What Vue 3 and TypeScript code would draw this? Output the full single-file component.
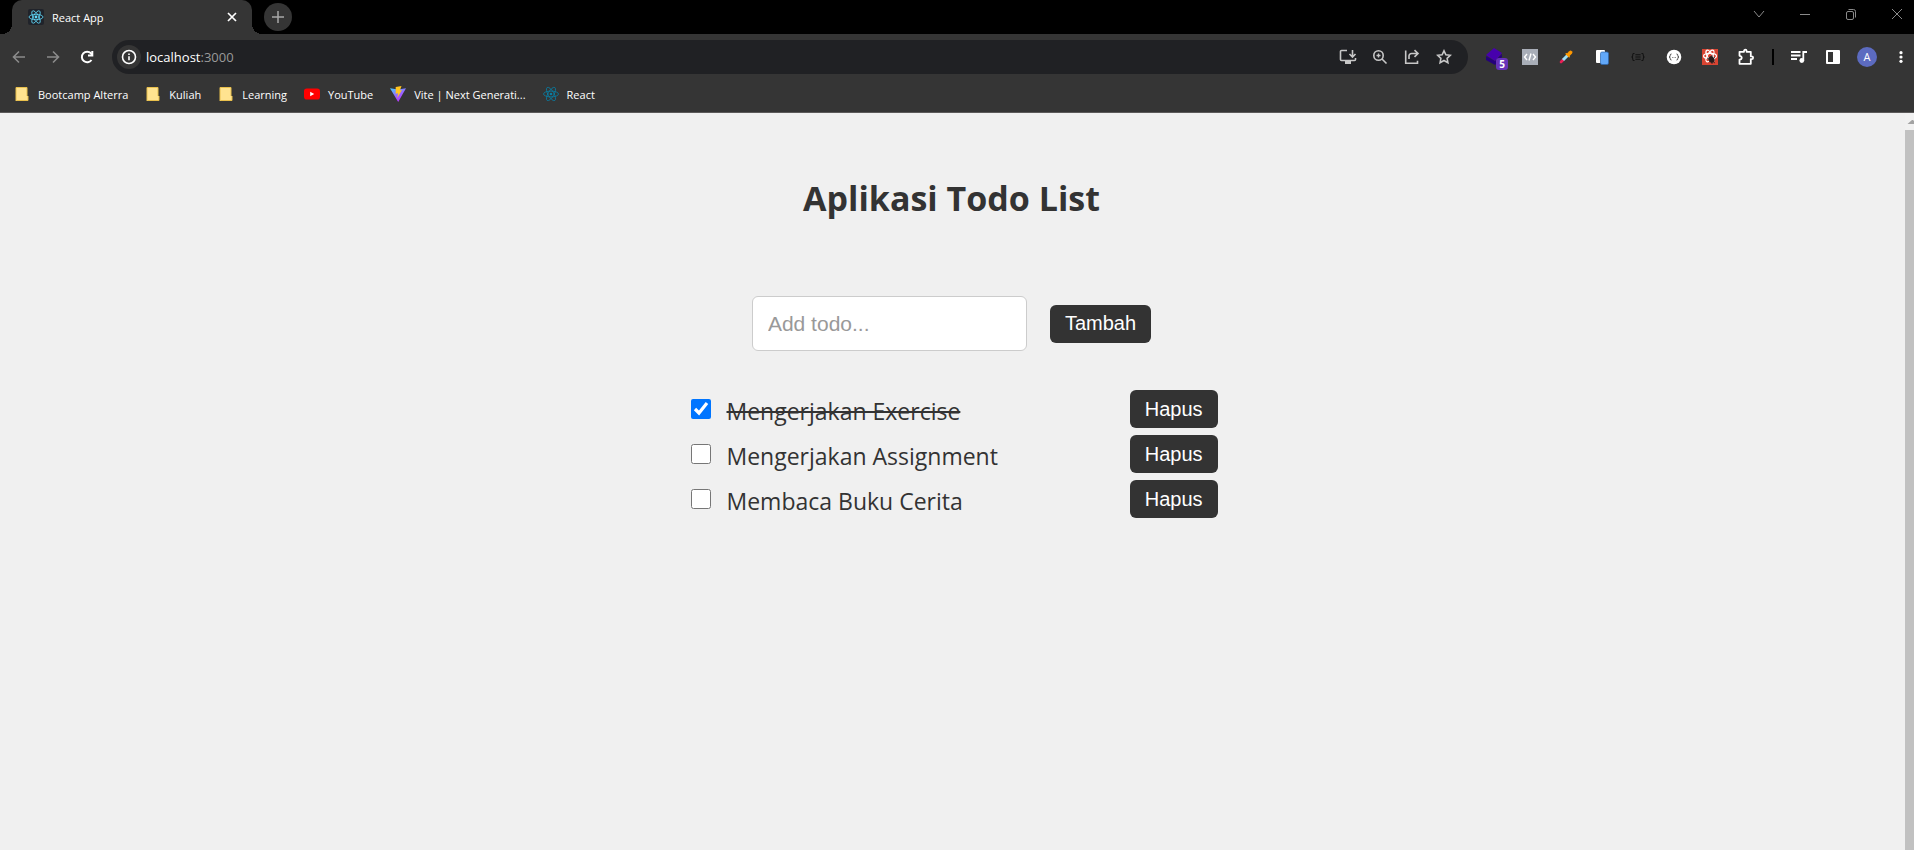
<script setup lang="ts">
import { ref } from 'vue'

interface Todo {
  id: number
  title: string
  done: boolean
}

interface Bookmark {
  label: string
  icon: 'folder' | 'youtube' | 'vite' | 'react'
}

const bookmarks: Bookmark[] = [
  { label: 'Bootcamp Alterra', icon: 'folder' },
  { label: 'Kuliah', icon: 'folder' },
  { label: 'Learning', icon: 'folder' },
  { label: 'YouTube', icon: 'youtube' },
  { label: 'Vite | Next Generati...', icon: 'vite' },
  { label: 'React', icon: 'react' },
]

const todos = ref<Todo[]>([
  { id: 1, title: 'Mengerjakan Exercise', done: true },
  { id: 2, title: 'Mengerjakan Assignment', done: false },
  { id: 3, title: 'Membaca Buku Cerita', done: false },
])
const draft = ref('')
let nextId = 4

function addTodo(): void {
  const title = draft.value.trim()
  if (!title) return
  todos.value.push({ id: nextId++, title, done: false })
  draft.value = ''
}

function removeTodo(id: number): void {
  todos.value = todos.value.filter((todo) => todo.id !== id)
}
</script>

<template>
  <div class="window">
    <header class="chrome">
      <div class="tab-strip">
        <div class="tab">
          <svg class="favicon" viewBox="0 0 16 16" aria-hidden="true">
            <rect width="16" height="16" rx="2" fill="#20232a" />
            <g fill="none" stroke="#61dafb" stroke-width=".8">
              <ellipse cx="8" cy="8" rx="7" ry="2.7" />
              <ellipse cx="8" cy="8" rx="7" ry="2.7" transform="rotate(60 8 8)" />
              <ellipse cx="8" cy="8" rx="7" ry="2.7" transform="rotate(120 8 8)" />
            </g>
            <circle cx="8" cy="8" r="1.4" fill="#61dafb" />
          </svg>
          <span class="tab-title">React App</span>
          <button class="tab-close" type="button" aria-label="Close tab">
            <svg width="10" height="10" viewBox="0 0 10 10"><path d="M1 1l8 8M9 1L1 9" stroke="#fff" stroke-width="1.7" /></svg>
          </button>
        </div>
        <button class="new-tab" type="button" aria-label="New tab">
          <svg width="12" height="12" viewBox="0 0 12 12"><path d="M6 0v12M0 6h12" stroke="#a8a8a8" stroke-width="1.5" /></svg>
        </button>
        <div class="window-controls">
          <button type="button" aria-label="Search tabs">
            <svg width="12" height="12" viewBox="0 0 12 12"><path d="M1 3l5 6 5-6" /></svg>
          </button>
          <button type="button" aria-label="Minimize">
            <svg width="12" height="12" viewBox="0 0 12 12"><path d="M1 6.500h10" /></svg>
          </button>
          <button type="button" aria-label="Restore">
            <svg width="12" height="12" viewBox="0 0 12 12"><rect x="1.500" y="3.500" width="7" height="8" rx="1.500" /><path d="M3.500 1.500h5a2 2 0 0 1 2 2v6" /></svg>
          </button>
          <button class="last" type="button" aria-label="Close">
            <svg width="12" height="12" viewBox="0 0 12 12"><path d="M1 1l10 10M11 1L1 11" /></svg>
          </button>
        </div>
      </div>

      <div class="toolbar">
        <nav class="history">
          <button type="button" aria-label="Back">
            <svg width="14" height="14" viewBox="0 0 14 14" stroke="#8b8b8b"><path d="M13 7H2M7 1.500L1.500 7 7 12.500" /></svg>
          </button>
          <button type="button" aria-label="Forward">
            <svg width="14" height="14" viewBox="0 0 14 14" stroke="#8b8b8b"><path d="M1 7h11M7 1.500L12.500 7 7 12.500" /></svg>
          </button>
          <button type="button" aria-label="Reload">
            <svg width="14" height="14" viewBox="0 0 14 14" stroke="#fff" stroke-width="1.800"><path d="M11.500 10A5.300 5.300 0 1 1 11 3.300L12.300 5" /><path d="M12.300 1v4.500H8" /></svg>
          </button>
        </nav>

        <div class="omnibox">
          <button class="site-info" type="button" aria-label="Site information">
            <svg width="16" height="16" viewBox="0 0 16 16" fill="none" stroke="#fff" stroke-width="1.600"><circle cx="8" cy="8" r="6.500" /><path d="M8 7.200v4M8 4.400v1.500" /></svg>
          </button>
          <div class="address">localhost<span class="port">:3000</span></div>
          <div class="page-actions">
            <button type="button" aria-label="Install app">
              <svg width="18" height="16" viewBox="0 0 18 16"><path d="M8 1.500H2.500a1 1 0 0 0-1 1v8a1 1 0 0 0 1 1h13a1 1 0 0 0 1-1V9M13.500 1v6.500M10.500 5l3 3 3-3" /><path d="M6 13.500h6" stroke-width="3" /></svg>
            </button>
            <button type="button" aria-label="Zoom">
              <svg width="16" height="16" viewBox="0 0 16 16"><circle cx="6.500" cy="6.500" r="4.700" /><path d="M10 10l4.500 4.500" /><path d="M6.500 4.500v4M4.500 6.500h4" stroke-width="1.400" /></svg>
            </button>
            <button type="button" aria-label="Share">
              <svg width="16" height="16" viewBox="0 0 16 16"><path d="M1.700 1.500v12.800h11.800v-2.500M5 10V7a2.500 2.500 0 0 1 2.500-2.500H13M10.500 1.200L14 4.500l-3.500 3.300" /></svg>
            </button>
            <button type="button" aria-label="Bookmark this page">
              <svg width="16" height="16" viewBox="0 0 16 16"><path d="M8 1.800l1.900 4 4.400.5-3.200 3 .8 4.400L8 11.500l-3.900 2.200.8-4.400-3.200-3 4.400-.5z" /></svg>
            </button>
          </div>
        </div>

        <div class="extensions">
          <button type="button" aria-label="Stack extension">
            <svg width="24" height="24" viewBox="0 0 24 24">
              <path d="M2 10l9 5 7-7v3l-7 8-9-5z" fill="#25007c" />
              <path d="M2 9l8-7 8 5-7 8z" fill="#4700ad" />
              <rect x="12" y="12" width="12" height="12" rx="3" fill="#6733b9" />
              <text x="18" y="22" text-anchor="middle" class="badge-text">5</text>
            </svg>
          </button>
          <button type="button" aria-label="Code extension">
            <svg width="16" height="16" viewBox="0 0 16 16"><rect width="16" height="16" fill="#a9aeb8" /><path d="M5 5L2.500 8 5 11M11 5l2.500 3L11 11M9 4.500l-2 7" fill="none" stroke="#fff" stroke-width="1.400" /></svg>
          </button>
          <button type="button" aria-label="Color picker">
            <svg width="16" height="16" viewBox="0 0 16 16" fill="none" stroke-linecap="round"><path d="M3 13l2-2" stroke="#e91e55" stroke-width="2.600" /><path d="M5 11L9.500 6.500" stroke="#9fe0f8" stroke-width="3" stroke-linecap="butt" /><path d="M10.500 5.500l2-2" stroke="#ff9800" stroke-width="3.800" /><path d="M8.200 4.800l3 3" stroke="#ff9800" stroke-width="1.500" /></svg>
          </button>
          <button type="button" aria-label="Copy extension">
            <svg width="16" height="16" viewBox="0 0 16 16"><rect x="2" y="1" width="9" height="13" rx="1" fill="#fff" /><rect x="6.500" y="3" width="8" height="12.500" rx="1.500" fill="#62a8f8" stroke="#2c66ac" stroke-width=".7" /></svg>
          </button>
          <button type="button" aria-label="JSON extension">
            <svg width="14" height="14" viewBox="0 0 16 16" fill="none" stroke="#111" stroke-width="1.200"><path d="M4 4H3q-1 0-1 2T.5 8Q2 8 2 10t1 2h1M12 4h1q1 0 1 2t1.500 2Q14 8 14 10t-1 2h-1M5 5.500h6M5 8h6M5 10.500h6" /></svg>
          </button>
          <button type="button" aria-label="JSON viewer">
            <svg width="16" height="16" viewBox="0 0 16 16"><circle cx="8" cy="8" r="7.300" fill="#fff" /><path d="M5.500 5Q4 5 4.200 6.500 4.300 8 3 8q1.300 0 1.200 1.500Q4 11 5.500 11M10.500 5Q12 5 11.800 6.500 11.700 8 13 8q-1.300 0-1.200 1.500Q12 11 10.500 11" fill="none" stroke="#333" stroke-width=".9" /><path d="M6 8.500h4" stroke="#777" stroke-width=".8" stroke-dasharray="1 .5" /></svg>
          </button>
          <button type="button" aria-label="React developer tools">
            <svg width="16" height="16" viewBox="0 0 16 16"><rect width="16" height="16" fill="#d84432" /><g fill="none" stroke="#fff" stroke-width="1.200"><ellipse cx="8" cy="7" rx="6.500" ry="2.600" /><ellipse cx="8" cy="7" rx="6.500" ry="2.600" transform="rotate(60 8 7)" /><ellipse cx="8" cy="7" rx="6.500" ry="2.600" transform="rotate(120 8 7)" /></g><ellipse cx="9.500" cy="10.500" rx="2.800" ry="3.500" fill="#2a1c1c" transform="rotate(-35 9.500 10.500)" /><path d="M5 9l8 5M7 13l6-5M10 6v9" stroke="#2a1c1c" stroke-width=".8" /></svg>
          </button>
          <button type="button" aria-label="Extensions">
            <svg width="18" height="18" viewBox="0 0 18 18" fill="none" stroke="#fff" stroke-width="1.800" stroke-linejoin="round"><path d="M2.500 3.800H7V3a1.300 1.300 0 0 1 2.600 0v.8h4.200v4.500h.9a1.400 1.400 0 0 1 0 2.800h-.9v4.700H2.500v-4.200q2.200-.3 2.200-1.900T2.500 7.800z" /></svg>
          </button>
        </div>
        <span class="separator"></span>
        <div class="browser-actions">
          <button type="button" aria-label="Media controls">
            <svg width="16" height="16" viewBox="0 0 16 16"><path d="M0 3h9.500M0 6.500h9.500M0 10h6M16 3h-3.700v8.500" fill="none" stroke="#fff" stroke-width="1.800" /><circle cx="10.800" cy="11.500" r="2.400" fill="#fff" /></svg>
          </button>
          <button type="button" aria-label="Side panel">
            <svg width="14" height="14" viewBox="0 0 14 14"><rect width="14" height="14" rx="1" fill="#fff" /><path d="M2 2h5v10H2z" fill="#353535" /></svg>
          </button>
          <button class="avatar" type="button" aria-label="Profile"><span>A</span></button>
          <button class="menu" type="button" aria-label="Browser menu">
            <svg width="4" height="12" viewBox="0 0 4 12" fill="#fff"><circle cx="2" cy="1.700" r="1.600" /><circle cx="2" cy="6" r="1.600" /><circle cx="2" cy="10.300" r="1.600" /></svg>
          </button>
        </div>
      </div>

      <nav class="bookmarks" aria-label="Bookmarks">
        <a v-for="bookmark in bookmarks" :key="bookmark.label" href="#">
          <svg v-if="bookmark.icon === 'folder'" viewBox="0 0 16 16"><path d="M2 1h11v9h1v5H2z" fill="#ffe390" /><path d="M2 15V1.500h11V10M14 10v4.500H2.500" fill="none" stroke="#e9c04c" stroke-width="1" /></svg>
          <svg v-else-if="bookmark.icon === 'youtube'" viewBox="0 0 16 16"><rect y="2.500" width="16" height="11" rx="2.800" fill="#f00" /><path d="M6.200 5.700v4.600l4-2.300z" fill="#fff" /></svg>
          <svg v-else-if="bookmark.icon === 'vite'" viewBox="0 0 16 16">
            <defs>
              <linearGradient id="vite-shield" x1="0" y1="0" x2=".6" y2="1"><stop offset="0" stop-color="#41d1ff" /><stop offset=".6" stop-color="#9a60ff" /><stop offset="1" stop-color="#bd34fe" /></linearGradient>
            </defs>
            <path d="M0 2.200l8 1.300 8-1.300L8.200 16z" fill="url(#vite-shield)" />
            <path d="M5.700 1l5.800-1-1.600 4.500 2-.4L7.300 12l.8-4.800-2.400.5z" fill="#ffc41f" />
          </svg>
          <svg v-else viewBox="0 0 16 16"><g fill="none" stroke="#087ea4" stroke-width=".8"><ellipse cx="8" cy="8" rx="7.500" ry="2.900" /><ellipse cx="8" cy="8" rx="7.500" ry="2.900" transform="rotate(60 8 8)" /><ellipse cx="8" cy="8" rx="7.500" ry="2.900" transform="rotate(120 8 8)" /></g><circle cx="8" cy="8" r="1.300" fill="#087ea4" /></svg>
          <span>{{ bookmark.label }}</span>
        </a>
      </nav>
    </header>

    <div class="viewport">
      <main class="page">
        <h1>Aplikasi Todo List</h1>
        <form class="add-form" @submit.prevent="addTodo">
          <input v-model="draft" type="text" placeholder="Add todo..." aria-label="Add todo" />
          <button class="action" type="submit">Tambah</button>
        </form>
        <ul class="todos">
          <li v-for="todo in todos" :key="todo.id">
            <input :id="`todo-${todo.id}`" v-model="todo.done" type="checkbox" />
            <label :for="`todo-${todo.id}`" :class="{ done: todo.done }">{{ todo.title }}</label>
            <button class="action" type="button" @click="removeTodo(todo.id)">Hapus</button>
          </li>
        </ul>
      </main>
      <div class="scrollbar" aria-hidden="true">
        <svg width="9" height="17" viewBox="0 0 9 17"><path d="M2.500 11L7 7h1l1 1v3z" fill="#a3a3a3" /></svg>
        <div class="thumb"></div>
      </div>
    </div>
  </div>
</template>

<style>
body {
  margin: 0;
  background: #f0f0f0;
}
</style>

<style scoped>
.window {
  display: flex;
  flex-direction: column;
  min-height: 100vh;
  font-family: "Open Sans", "Noto Sans", sans-serif;
  color: #333;
}

.chrome {
  background: #353535;
  border-bottom: 1px solid #5c5a5a;
  color: #fff;
  font-size: 11px;
}

.chrome button {
  display: flex;
  align-items: center;
  justify-content: center;
  padding: 0;
  border: 0;
  background: none;
  color: inherit;
  font-family: inherit;
}

.tab-strip {
  display: flex;
  height: 34px;
  padding-left: 12px;
  background: #000;
}

.tab {
  position: relative;
  display: flex;
  align-items: center;
  box-sizing: border-box;
  width: 240px;
  padding: 0 12px 0 16px;
  border-radius: 10px 10px 0 0;
  background: #353535;
}

.tab::before,
.tab::after {
  content: "";
  position: absolute;
  bottom: 0;
  width: 10px;
  height: 10px;
}

.tab::before {
  right: 100%;
  background: radial-gradient(circle at 0 0, #000 10px, #353535 10px);
}

.tab::after {
  left: 100%;
  background: radial-gradient(circle at 100% 0, #000 10px, #353535 10px);
}

.favicon {
  width: 16px;
  height: 16px;
  margin-right: 8px;
}

.tab-title {
  flex: 1;
}

.chrome .tab-close {
  width: 16px;
  height: 16px;
}

.chrome .new-tab {
  width: 28px;
  height: 28px;
  margin: 3px 0 0 12px;
  border-radius: 50%;
  background: #353535;
}

.window-controls {
  display: flex;
  height: 28px;
  margin-left: auto;
}

.window-controls button {
  width: 46px;
}

.chrome .window-controls .last {
  width: 40px;
  padding-left: 6px;
}

.window-controls svg {
  fill: none;
  stroke: #8a8a8a;
}

.toolbar {
  display: flex;
  align-items: center;
  height: 46px;
}

.history {
  display: flex;
  width: 110px;
  padding-left: 2px;
}

.history button {
  width: 34px;
  height: 34px;
}

.history svg {
  fill: none;
  stroke-width: 1.6;
}

.history button:last-child svg {
  stroke-width: 2;
}

.omnibox {
  display: flex;
  flex: 1;
  align-items: center;
  box-sizing: border-box;
  height: 34px;
  padding: 0 8px 0 5px;
  border-radius: 17px;
  background: #202124;
}

.chrome .site-info {
  width: 24px;
  height: 24px;
  border-radius: 50%;
  background: #353535;
}

.address {
  flex: 1;
  margin-left: 5px;
  font-size: 13px;
}

.port {
  color: #9a9a9a;
}

.page-actions {
  display: flex;
}

.page-actions button {
  width: 32px;
  height: 32px;
}

.page-actions svg {
  fill: none;
  stroke: #c7c7c7;
  stroke-width: 1.6;
}

.extensions {
  display: flex;
  padding-left: 8px;
}

.extensions button {
  width: 36px;
  height: 34px;
}

.extensions button:first-child {
  padding: 2px 0 0 4px;
}

.badge-text {
  fill: #fff;
  font: bold 10px "Open Sans", sans-serif;
}

.separator {
  width: 2px;
  height: 16px;
  margin: 0 8px;
  background: #000;
}

.browser-actions {
  display: flex;
}

.browser-actions button {
  width: 34px;
  height: 34px;
}

.avatar span {
  width: 20px;
  border-radius: 50%;
  background: #5c6bc0;
  font-size: 11px;
  line-height: 20px;
}

.chrome .browser-actions .menu {
  width: 30px;
  padding-left: 4px;
}

.bookmarks {
  display: flex;
  gap: 17px;
  align-items: center;
  box-sizing: border-box;
  height: 32px;
  padding: 0 0 4px 14px;
}

.bookmarks a {
  display: flex;
  gap: 8px;
  align-items: center;
  height: 28px;
  color: inherit;
  text-decoration: none;
}

.bookmarks svg {
  width: 16px;
  height: 16px;
}

.viewport {
  display: flex;
  flex: 1;
}

.page {
  flex: 1;
  background: #f0f0f0;
}

h1 {
  margin: 60px 0 72px;
  padding-right: 2px;
  font-size: 34px;
  line-height: 51px;
  text-align: center;
}

.add-form {
  display: flex;
  gap: 23px;
  align-items: center;
  justify-content: center;
  padding-right: 2px;
}

.add-form input {
  box-sizing: border-box;
  width: 275px;
  height: 55px;
  padding: 0 15px;
  border: 1px solid #ccc;
  border-radius: 6px;
  background: #fff;
  color: #333;
  font: 21px "Liberation Sans", Arial, sans-serif;
}

.add-form input::placeholder {
  color: #999;
}

.action {
  height: 38px;
  padding: 0 15px;
  border: 0;
  border-radius: 6px;
  background: #333;
  color: #fff;
  font: 20px "Liberation Sans", Arial, sans-serif;
}

.todos {
  display: flex;
  flex-direction: column;
  gap: 7px;
  box-sizing: border-box;
  width: 530px;
  margin: 39px auto 0;
  padding: 0 0 0 3px;
  list-style: none;
}

.todos li {
  display: flex;
  align-items: center;
}

.todos input {
  width: 20px;
  height: 20px;
  margin: 0 16px 0 0;
  accent-color: #0075ff;
}

.todos label {
  flex: 1;
  padding-top: 3px;
  font-size: 23px;
  line-height: 32px;
}

.todos .done {
  text-decoration: line-through;
}

.scrollbar {
  display: flex;
  flex-direction: column;
  width: 9px;
  background: #f1f1f1;
}

.thumb {
  flex: 1;
  background: #c1c1c1;
}
</style>
